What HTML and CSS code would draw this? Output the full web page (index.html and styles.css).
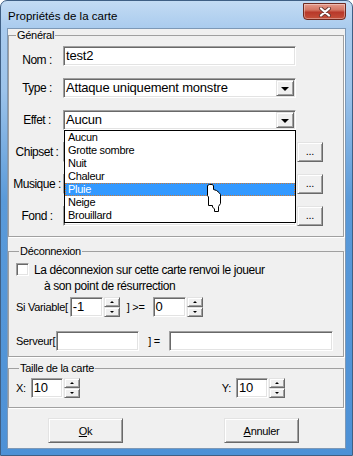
FILE: index.html
```html
<!DOCTYPE html>
<html lang="fr">
<head>
    <meta charset="UTF-8">
    <title>Propriétés de la carte</title>
    <link rel="stylesheet" href="styles.css">
</head>
<body>
    <div class="window">
        <div class="titlebar">
            <span class="title">Propriétés de la carte</span>
            <button class="close" aria-label="Fermer">
                <svg width="14" height="10" viewBox="0 0 14 10">
                    <path d="M3 1.5 L11 8.5 M11 1.5 L3 8.5" stroke="#6b3a33" stroke-width="4" stroke-linecap="round"/>
                    <path d="M3 1.5 L11 8.5 M11 1.5 L3 8.5" stroke="#fff" stroke-width="2.2" stroke-linecap="round"/>
                </svg>
            </button>
        </div>

        <div class="content">
            <fieldset class="group general">
                <legend>Général</legend>
                <div class="form-grid">
                    <label class="row-label label-nom">Nom :</label>
                    <div class="field">test2</div>
                    <span></span>

                    <label class="row-label">Type :</label>
                    <div class="field combo">
                        <span class="combo-value">Attaque uniquement monstre</span>
                        <span class="combo-btn"><i class="arrow-down"></i></span>
                    </div>
                    <span></span>

                    <label class="row-label">Effet :</label>
                    <div class="field combo">
                        <span class="combo-value">Aucun</span>
                        <span class="combo-btn"><i class="arrow-down"></i></span>
                        <ul class="dropdown">
                            <li>Aucun</li>
                            <li>Grotte sombre</li>
                            <li>Nuit</li>
                            <li>Chaleur</li>
                            <li class="selected">Pluie</li>
                            <li>Neige</li>
                            <li>Brouillard</li>
                        </ul>
                        <svg class="cursor" width="16" height="29" viewBox="0 0 16 29">
                            <path d="M1.5 1.5 L3.5 0.5 L6 0.5 L7.5 1.5 L7.5 5.5 L10.5 6.5 L13 8.5 L14.5 10.5 L14.5 19.5 L12.5 22.5 L12.5 27.5 L8.5 27.5 L8.5 25 L6.5 23 L6.5 21.5 L2.5 21.5 L2.5 13 L1.5 11.5 Z" fill="#fff" stroke="#000" stroke-width="1"/>
                        </svg>
                    </div>
                    <span></span>

                    <label class="row-label">Chipset :</label>
                    <div class="field"></div>
                    <button class="btn browse">...</button>

                    <label class="row-label">Musique :</label>
                    <div class="field"></div>
                    <button class="btn browse">...</button>

                    <label class="row-label">Fond :</label>
                    <div class="field"></div>
                    <button class="btn browse">...</button>
                </div>
            </fieldset>

            <fieldset class="group deconnexion">
                <legend>Déconnexion</legend>
                <div class="check-row">
                    <span class="checkbox"></span>
                    <div class="check-text">
                        <div>La déconnexion sur cette carte renvoi le joueur</div>
                        <div class="indent">à son point de résurrection</div>
                    </div>
                </div>
                <div class="line var-line">
                    <span>Si Variable[</span>
                    <div class="spin">
                        <div class="field num">-1</div>
                        <div class="spin-btns">
                            <span class="btn spin-btn"><i class="arrow-up"></i></span>
                            <span class="btn spin-btn"><i class="arrow-small-down"></i></span>
                        </div>
                    </div>
                    <span class="op">]&nbsp;&gt;=</span>
                    <div class="spin">
                        <div class="field num">0</div>
                        <div class="spin-btns">
                            <span class="btn spin-btn"><i class="arrow-up"></i></span>
                            <span class="btn spin-btn"><i class="arrow-small-down"></i></span>
                        </div>
                    </div>
                </div>
                <div class="line server-line">
                    <span>Serveur[</span>
                    <div class="field server-key"></div>
                    <span class="op">]&nbsp;=</span>
                    <div class="field server-value"></div>
                </div>
            </fieldset>

            <fieldset class="group taille">
                <legend>Taille de la carte</legend>
                <div class="line size-line">
                    <div class="coord">
                        <span>X:</span>
                        <div class="spin">
                            <div class="field num">10</div>
                            <div class="spin-btns">
                                <span class="btn spin-btn"><i class="arrow-up"></i></span>
                                <span class="btn spin-btn"><i class="arrow-small-down"></i></span>
                            </div>
                        </div>
                    </div>
                    <div class="coord">
                        <span>Y:</span>
                        <div class="spin">
                            <div class="field num">10</div>
                            <div class="spin-btns">
                                <span class="btn spin-btn"><i class="arrow-up"></i></span>
                                <span class="btn spin-btn"><i class="arrow-small-down"></i></span>
                            </div>
                        </div>
                    </div>
                </div>
            </fieldset>

            <div class="actions">
                <button class="btn action"><u>O</u>k</button>
                <button class="btn action"><u>A</u>nnuler</button>
            </div>
        </div>
    </div>
</body>
</html>
```

FILE: styles.css
```css
body {
    margin: 0;
    background: #fff;
    font-family: "Liberation Sans", Arial, sans-serif;
    font-size: 11px;
    letter-spacing: -0.3px;
    color: #000;
}
.window {
    box-sizing: border-box;
    width: 353px;
    height: 456px;
    display: flex;
    flex-direction: column;
    padding: 0 6px 6px;
    border: 1px solid #3f5f84;
    border-radius: 7px 7px 0 0;
    background: linear-gradient(180deg, #c3dbf3 0, #a9cbee 28px, #9cc3ea 90px, #5a9ad9 200px, #4d91d6 100%);
}
.titlebar {
    height: 27px;
    display: flex;
    align-items: center;
    justify-content: space-between;
}
.title {
    font-size: 11.5px;
    letter-spacing: 0;
    padding-left: 1px;
    padding-top: 2px;
}
.close {
    align-self: flex-start;
    margin-top: 2px;
    margin-right: 0;
    width: 43px;
    height: 17px;
    padding: 0;
    border: 1px solid #6e2a20;
    border-radius: 0 0 4px 4px;
    background: linear-gradient(180deg, #e59a8a 0, #d37562 40%, #b8392a 55%, #c5503a 100%);
    box-shadow: inset 0 0 0 1px rgba(255, 255, 255, 0.35);
    display: flex;
    align-items: center;
    justify-content: center;
}
.content {
    flex: 1;
    background: #f0f0f0;
    border: 1px solid #7d98b6;
    display: flex;
    flex-direction: column;
}
.group {
    margin: 0 1px 0 0;
    padding: 0 4px 10px;
    border: 1px solid #a0a0a0;
    box-shadow: 1px 1px 0 #fff;
    min-width: 0;
}
.group legend {
    padding: 0 1px;
    margin-left: 3px;
    line-height: 13px;
}
.form-grid {
    display: grid;
    grid-template-columns: 50px 234px 26px;
    grid-auto-rows: 20px;
    row-gap: 12px;
    margin-top: 4px;
}
.row-label {
    font-size: 12px;
    letter-spacing: -0.5px;
    text-align: center;
    padding-right: 2px;
    align-self: center;
}
.label-nom {
    padding-top: 8px;
}
.field {
    box-sizing: border-box;
    height: 20px;
    background: #fff;
    border: 1px solid;
    border-color: #a0a0a0 #fff #fff #a0a0a0;
    box-shadow: inset 1px 1px 0 #696969, inset -1px -1px 0 #e3e3e3;
    padding: 0 2px;
    font-size: 13px;
    letter-spacing: -0.2px;
    line-height: 18px;
    white-space: nowrap;
}
.form-grid .field {
    width: 233px;
}
.combo {
    position: relative;
    display: flex;
    align-items: center;
    padding-right: 1px;
}
.combo-value {
    flex: 1;
}
.btn {
    box-sizing: border-box;
    background: #f0f0f0;
    border: 1px solid;
    border-color: #e3e3e3 #696969 #696969 #e3e3e3;
    box-shadow: inset 1px 1px 0 #fff, inset -1px -1px 0 #a0a0a0;
    font-family: inherit;
    font-size: 11px;
    letter-spacing: -0.3px;
    color: #000;
    padding: 0;
}
.combo-btn {
    box-sizing: border-box;
    width: 18px;
    height: 16px;
    background: #f0f0f0;
    border: 1px solid;
    border-color: #e3e3e3 #696969 #696969 #e3e3e3;
    box-shadow: inset 1px 1px 0 #fff, inset -1px -1px 0 #a0a0a0;
    display: flex;
    align-items: center;
    justify-content: center;
}
.arrow-down {
    width: 0;
    height: 0;
    border-left: 4px solid transparent;
    border-right: 4px solid transparent;
    border-top: 4px solid #000;
    margin-top: 1px;
}
.browse {
    height: 20px;
    width: 26px;
    line-height: 14px;
    padding-bottom: 2px;
}
.dropdown {
    position: absolute;
    top: calc(100% + 1px);
    left: 0;
    width: 232px;
    margin: 0;
    padding: 0;
    list-style: none;
    background: #fff;
    border: 1px solid #000;
    box-sizing: border-box;
    font-size: 11px;
    letter-spacing: -0.3px;
    z-index: 2;
}
.dropdown li {
    height: 13px;
    line-height: 13px;
    padding-left: 3px;
}
.dropdown .selected {
    background: #3399ff;
    color: #fff;
    outline: 1px dotted #c97a3a;
    outline-offset: -1px;
}
.cursor {
    position: absolute;
    left: 142px;
    top: 73px;
    z-index: 3;
}
.deconnexion,
.taille {
    padding: 0 7px 5px;
}
.deconnexion {
    margin-top: 8px;
}
.check-row {
    display: flex;
    margin-top: 4px;
}
.checkbox {
    box-sizing: border-box;
    width: 13px;
    height: 13px;
    margin-top: 1px;
    background: #fff;
    border: 1px solid;
    border-color: #a0a0a0 #fff #fff #a0a0a0;
    box-shadow: inset 1px 1px 0 #696969, inset -1px -1px 0 #e3e3e3;
}
.check-text {
    margin-left: 5px;
    font-size: 12px;
    letter-spacing: -0.4px;
    line-height: 16px;
}
.indent {
    padding-left: 10px;
}
.line {
    display: flex;
    align-items: center;
}
.var-line {
    margin-top: 3px;
}
.var-line > span:first-child {
    margin-right: 2px;
}
.server-line {
    margin-top: 14px;
}
.server-line > span:first-child {
    margin-right: 1px;
}
.op {
    margin: 0 8px 0 7px;
}
.server-line .op {
    margin: 0 9px 0 9px;
}
.spin {
    display: flex;
}
.spin .field {
    width: 33px;
}
.spin-btns {
    display: flex;
    flex-direction: column;
    margin-left: 1px;
}
.spin-btn {
    width: 16px;
    height: 10px;
    display: flex;
    align-items: center;
    justify-content: center;
}
.arrow-up {
    width: 0;
    height: 0;
    border-left: 2px solid transparent;
    border-right: 2px solid transparent;
    border-bottom: 2px solid #000;
}
.arrow-small-down {
    width: 0;
    height: 0;
    border-left: 2px solid transparent;
    border-right: 2px solid transparent;
    border-top: 2px solid #000;
}
.server-key {
    width: 83px;
}
.server-value {
    width: 164px;
}
.taille {
    margin-top: 5px;
    padding-bottom: 9px;
}
.size-line {
    margin-top: 3px;
    gap: 142px;
}
.coord {
    display: flex;
    align-items: center;
    gap: 5px;
}
.coord .field {
    width: 32px;
}
.actions {
    display: flex;
    gap: 101px;
    padding-left: 40px;
    margin-top: 10px;
}
.action {
    width: 75px;
    height: 25px;
}
```
